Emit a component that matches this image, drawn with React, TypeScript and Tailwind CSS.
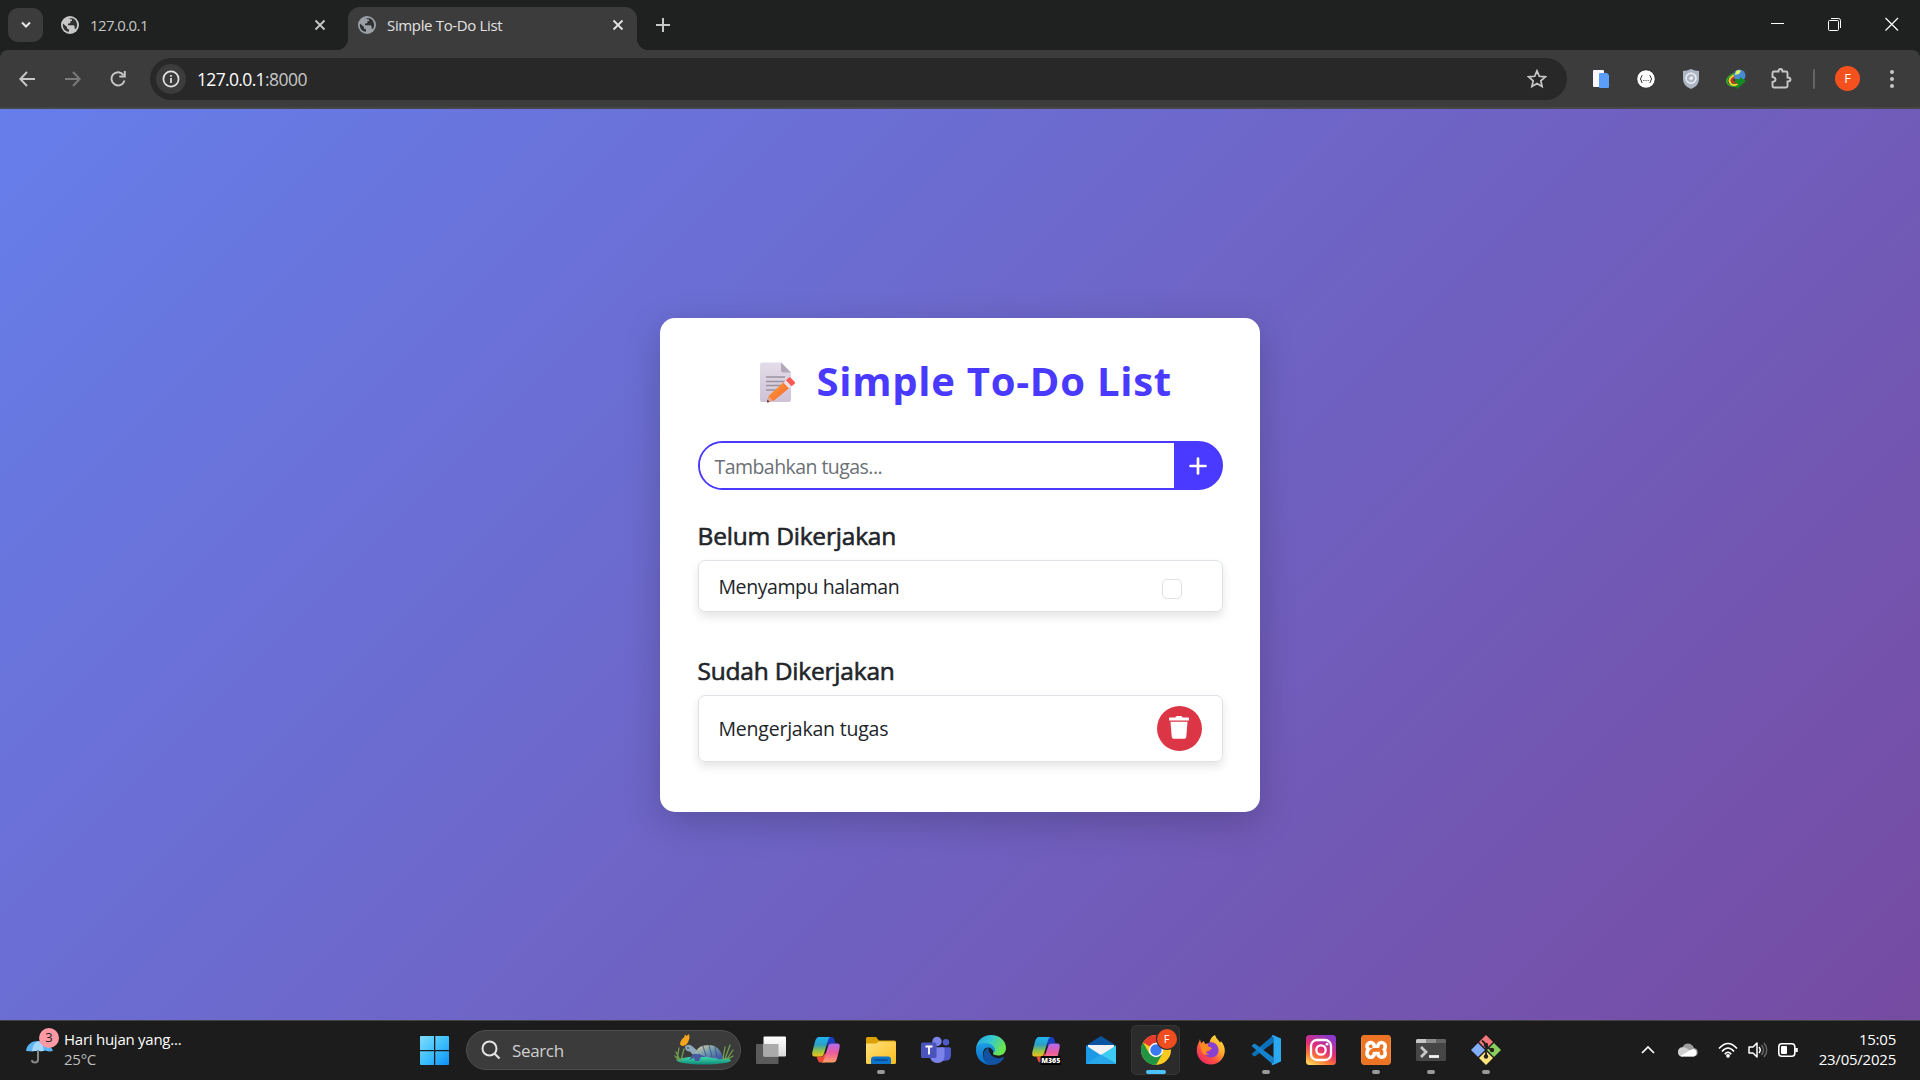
import React from "react";
import { SiXampp } from "react-icons/si";

type P = { children?: React.ReactNode; className?: string; vb?: string };
const Svg = ({ children, className, vb = "0 0 24 24" }: P) => (
  <svg viewBox={vb} className={"shrink-0 " + (className ?? "")} fill="none">{children}</svg>
);

const Globe = ({ color }: { color: string }) => (
  <Svg vb="0 0 18 18" className="size-[18px]">
    <circle cx="9" cy="9" r="9" fill={color} />
    <path d="M2 7.500 6 11v1.600l2 1v2.200C4.300 15.600 1.800 12.600 1.800 9zM8.500 2.200h3.200c2.600 1.100 4.400 3.700 4.400 6.600 0 1.700-.5 3.200-1.500 4.300l-1-.5v-2.300l-1-1H7V7.500h1.500l1-1V5h1.500V3.500L8.500 3z" fill="#303231" />
  </Svg>
);

const Close = ({ className }: P) => (
  <Svg vb="0 0 12 12" className={"size-3 " + (className ?? "")}>
    <path d="M1.500 1.500l9 9M10.500 1.500l-9 9" stroke="currentColor" strokeWidth="1.800" />
  </Svg>
);

const Memo = () => (
  <Svg vb="0 0 36 42" className="mt-[6px] h-[42px] w-9">
    <defs>
      <linearGradient id="paper" x1="0" y1="0" x2="0" y2="1"><stop stopColor="#e3dce8" /><stop offset="1" stopColor="#cfc3d7" /></linearGradient>
      <linearGradient id="pencil" x1="0" y1="0" x2="1" y2="1"><stop stopColor="#ffa336" /><stop offset="1" stopColor="#f4602f" /></linearGradient>
    </defs>
    <path d="M2 .5h19L31 10.500V38a2 2 0 0 1-2 2H2a2 2 0 0 1-2-2V2.500a2 2 0 0 1 2-2z" fill="url(#paper)" />
    <path d="M21 .5 31 10.500H23a2 2 0 0 1-2-2z" fill="#b3a8b8" />
    <path d="M6 15h19M6 19.500h19M6 23.500h17M6 28h10" stroke="#9a929e" strokeWidth="1.300" />
    <path d="M9 33.500 25 19l5.500 6L14 38.500l-7 1.500z" fill="url(#pencil)" />
    <path d="M8.500 34 13 38.800 7 40.500z" fill="#e6a58d" /><path d="m7.500 37.500 2 2.500-2.500.5z" fill="#43303a" />
    <path d="m23.500 20.500 5.500 6 2.500-2.300-5.500-6z" fill="#e9e3f0" />
    <path d="m26 18.200 3-2.600q1-.7 2 .3l3.800 4q.7 1-.3 2L31.500 24.200z" fill="#fb5a53" />
  </Svg>
);

const Windows = () => (
  <Svg vb="0 0 30 30" className="size-[30px]">
    <defs><linearGradient id="win" x1="0" y1="0" x2="1" y2="1"><stop stopColor="#7fdcfb" /><stop offset=".5" stopColor="#3fc0fc" /><stop offset="1" stopColor="#0c91f7" /></linearGradient></defs>
    <path d="M0 1q0-1 1-1h13v14H0zM15.300 0H28q1 0 1 1v13H15.300zM0 15.300h14V29H1q-1 0-1-1zM15.300 15.300H29V28q0 1-1 1H15.300z" fill="url(#win)" />
  </Svg>
);

const Turtle = () => (
  <Svg vb="0 0 60 32" className="h-8 w-[60px]">
    <defs>
      <linearGradient id="pond" x1="0" y1="0" x2="0" y2="1"><stop stopColor="#3de0b0" /><stop offset="1" stopColor="#118a79" /></linearGradient>
      <linearGradient id="shell" x1="0" y1="0" x2="1" y2="1"><stop stopColor="#e5d2a1" /><stop offset=".5" stopColor="#6d98ad" /><stop offset="1" stopColor="#3c4ba2" /></linearGradient>
    </defs>
    <ellipse cx="30" cy="26.500" rx="27" ry="4" fill="url(#pond)" />
    <path d="M3 26 5 14M6 26 2 18M7 26l3-11M4 25l-3-3M49 25l2-12M51 25l5-14M53 25l6-9M50 25l-4-5M54 25l5-3" stroke="#6f9f50" strokeWidth="1.300" strokeLinecap="round" />
    <path d="M11 12.500q3-3 7-.5l8 7-1 4q-6-1-9-5.500-5 0-5-5z" fill="#8fa9b8" />
    <path d="M19 20h27l3 5-5 .5-2-2.500H27l-2 4h-4l-1-3-5 2z" fill="#485a9e" />
    <path d="M22 18q2-7 13-7 10 0 14 12-13 4-27-5z" fill="url(#shell)" />
    <path d="m29 12 3 10M35 11l3 12M41 13l2 10" stroke="#354b84" strokeWidth=".8" />
    <path d="M6 9.500Q7 5 10 3.500L11 .5l1.500 1.500L15 0l.5 4-1 3q-1.500 4.500-5.500 5-3 0-3-3z" fill="#f5a51d" />
    <circle cx="14" cy="14" r=".8" fill="#182036" />
  </Svg>
);

const Copilot = ({ m365 = false, id }: { m365?: boolean; id: string }) => (
  <Svg vb="0 0 30 30" className="size-[30px] overflow-visible">
    <defs>
      <linearGradient id={id + "a"} x1="0" y1="0" x2="0" y2="1"><stop stopColor="#1fb3f5" /><stop offset=".4" stopColor="#2c9fc1" /><stop offset=".7" stopColor="#90c248" /><stop offset="1" stopColor="#f2c21b" /></linearGradient>
      <linearGradient id={id + "b"} x1="0" y1="0" x2="0" y2="1"><stop stopColor="#b16aef" /><stop offset=".5" stopColor="#ed5c9c" /><stop offset="1" stopColor="#fba065" /></linearGradient>
    </defs>
    <path d="M16 2h4.500c2 0 2.500 1.500 3 3l1 3.500h-5l-3 3z" fill="#173fc0" />
    <path d="M14 27.500H9.500c-2 0-2.500-1.500-3-3l-1-3h6l3-4z" fill="#e94b36" />
    <path d="M8 2h12c-2 0-2.500 2-3 3.500l-4 13c-.7 2-1.500 3-3.500 3h-6C.5 21.500 1 18 2 14.500L4 6.500C5 3.500 6 2 8 2z" fill={`url(#${id}a)`} />
    <path d="M22 27.500H10c2 0 2.500-2 3-3.500l4-12.500c.7-2 1.500-3 3.500-3h6c3 0 2.500 3.500 1.500 7l-2 8c-1 3-2 4-4 4z" fill={`url(#${id}b)`} />
    {m365 && <><rect x="9.500" y="21" width="20.500" height="9" rx="1.500" fill="#000" /><text x="19.800" y="28.200" textAnchor="middle" fontSize="7" fontWeight="800" fontFamily="Open Sans, sans-serif" fill="#fff">M365</text></>}
  </Svg>
);

const Folder = () => (
  <Svg vb="0 0 30 30" className="size-[30px]">
    <defs><linearGradient id="fold" x1="0" y1="0" x2="1" y2="1"><stop stopColor="#ffe17e" /><stop offset="1" stopColor="#fcbd1c" /></linearGradient></defs>
    <path d="M0 3.500Q0 2 1.500 2H10l3 3.500h15.500Q30 5.500 30 7v5H0z" fill="#dda007" />
    <path d="M0 8.500h10l3-2h15.500Q30 6.500 30 8v19.500Q30 29 28.500 29h-27Q0 29 0 27.500z" fill="url(#fold)" />
    <path d="M5 29v-4.500q0-3 3-3h14q3 0 3 3V29z" fill="#0d72c9" /><path d="M9 25h12" stroke="#06498d" strokeWidth="1.500" strokeLinecap="round" />
  </Svg>
);

const Teams = () => (
  <Svg vb="0 0 30 30" className="size-[30px]">
    <circle cx="25" cy="7.300" r="3.200" fill="#5059c9" /><circle cx="16" cy="6.500" r="4.700" fill="#7b83eb" />
    <path d="M21 12.300h7.500q1.500 0 1.500 1.500v6.500q0 5-5 5.500h-5z" fill="#5059c9" />
    <path d="M9 12.300h13q1.500 0 1.500 1.500V21q0 7-7 7t-7.500-7z" fill="#7b83eb" />
    <rect y="7.500" width="15.500" height="15.500" rx="1.500" fill="#4b53bc" />
    <path d="M4.500 11.500h7M8 11.500v8" stroke="#fff" strokeWidth="1.800" />
  </Svg>
);

const Edge = () => (
  <Svg vb="0 0 30 30" className="size-[30px]">
    <defs>
      <linearGradient id="eg" x1="0" y1="0" x2="1" y2=".4"><stop stopColor="#249fe4" /><stop offset=".5" stopColor="#34c7d3" /><stop offset="1" stopColor="#6be650" /></linearGradient>
      <linearGradient id="eb" x1="0" y1="0" x2="0" y2="1"><stop stopColor="#1b9ee2" /><stop offset="1" stopColor="#0868c9" /></linearGradient>
    </defs>
    <path d="M0 14C.6 5.500 7 0 15 0c9 0 15 6 15 13 0 5-3.500 7.500-8 7.500-5 0-5.500-2-4.500-3.200C19.500 14 17 11 13 10 7 8.500 2 10 0 14z" fill="url(#eg)" />
    <path d="M0 15C0 9.500 5 8 9 8c6 0 10 3.500 10 7 0 1-.5 1.800-1.200 2.500-.8-3-3-5-5.500-5C8 12.500 7 16 7 19c0 6 4 9.500 9 11h-1C6.500 30 0 23.500 0 15z" fill="url(#eb)" />
    <path d="M12.300 12.500C9 14 7.500 17 7.500 20c0 5.500 4 10 9 10 5 0 9-3 11.500-7 .5-1 0-1.300-1-.8-7 2.800-14-.8-14.700-9.700z" fill="#1152a2" />
  </Svg>
);

const Mail = () => (
  <Svg vb="0 0 30 30" className="size-[30px]">
    <path d="m0 10.500 15-9.500 15 9.500V20H0z" fill="#0a54a0" /><path d="M2 10h26v8L15 24 2 18z" fill="#f2f2f4" />
    <path d="m0 10.500 17 11L30 29H0z" fill="#1d9ae6" /><path d="M30 10.500 15 20l15 9z" fill="#3ccbf4" /><path d="M0 29 15 19.500 30 29z" fill="#28a8ea" />
  </Svg>
);

const Chrome = () => (
  <div className="relative size-[30px]">
    <Svg vb="0 0 30 30" className="size-[30px]">
      <circle cx="15" cy="15" r="15" fill="#ffca20" />
      <path d="M15 15 2 7.500A15 15 0 0 1 28 7.500H15z" fill="#e33b2e" />
      <path d="M2 7.500A15 15 0 0 0 15 30l6.500-11.300L8.500 18.700z" fill="#229544" />
      <circle cx="15" cy="15" r="7.200" fill="#fff" /><circle cx="15" cy="15" r="5.700" fill="#3a7af0" />
    </Svg>
    <span className="absolute left-4 -top-[6px] flex size-5 items-center justify-center rounded-full bg-[#ee4d20] text-[11px] text-white ring-1 ring-[#2b2b2b]">F</span>
  </div>
);

const Firefox = () => (
  <Svg vb="0 0 30 30" className="size-[30px]">
    <defs><linearGradient id="ff" x1="1" y1="0" x2=".2" y2="1"><stop stopColor="#fff04a" /><stop offset=".4" stopColor="#ffae2c" /><stop offset=".7" stopColor="#ff5340" /><stop offset="1" stopColor="#ea2467" /></linearGradient></defs>
    <path d="M4 4q.3 2.500 1.200 4L8 6q0 2 1.500 3l4-1C14 4 16 1.500 19 0q1 3.500 4 6l1 1.500q1-.5.700-1.500 4 4 4.100 9.500A14 14 0 0 1 .8 15.500C.8 11 2 9 3 7z" fill="url(#ff)" />
    <path d="M14 7q7 0 8.500 7c.6 5-3 8.500-7.500 8.500S8 19.500 8 16q2 2 5 0l3-3-4-1.500q-1-3 2-4.500z" fill="#8a3fd4" />
    <path d="M4 10q4-3 7 1l3.500 1.500q-.5 2-4 3-1.500 3 3 4-7 1.500-8-4z" fill="#ff8b24" />
  </Svg>
);

const VSCode = () => (
  <Svg vb="0 0 30 30" className="size-[30px]">
    <path d="m.5 19 2 2q1 .7 2 0L22.500 7.500V0z" fill="#0b70b8" />
    <path d="m.5 11 2-2q1-.7 2 0l18 13.500V30z" fill="#1482cc" />
    <path d="M22 0 30 3.500v23L22 30q-1 0-1.500-1l2-1.500v-25L20.500 1z" fill="#2aa8f0" />
  </Svg>
);

const Instagram = () => (
  <Svg vb="0 0 30 30" className="size-[30px]">
    <defs>
      <linearGradient id="ig" x1=".2" y1="1" x2=".7" y2="0"><stop stopColor="#ffd45c" /><stop offset=".25" stopColor="#fb7a35" /><stop offset=".55" stopColor="#e22d75" /><stop offset="1" stopColor="#8a39cd" /></linearGradient>
    </defs>
    <rect width="30" height="30" rx="3.500" fill="url(#ig)" />
    <rect x="5" y="5" width="20" height="20" rx="6" stroke="#fff" strokeWidth="2.300" /><circle cx="15" cy="15" r="4.700" stroke="#fff" strokeWidth="2.300" /><circle cx="21" cy="9.200" r="1.400" fill="#fff" />
  </Svg>
);

const Xampp = () => (
  <div className="size-[30px] rounded-[5px] bg-white">
    <SiXampp className="size-[30px] text-[#ed7424]" />
  </div>
);

const Terminal = () => (
  <Svg vb="0 0 30 30" className="size-[30px]">
    <rect y="4" width="30" height="22" rx="1.500" fill="#464646" /><path d="M0 8V5.500Q0 4 1.500 4H10v4z" fill="#c6c6c6" /><path d="M10 4h10v4H10z" fill="#8c8c8c" /><path d="M20 4h8.500Q30 4 30 5.500V8H20z" fill="#646464" />
    <path d="m5 12 5 5-5 5" stroke="#c8c8c8" strokeWidth="2.800" /><path d="M13 21.500h10" stroke="#f3f3f3" strokeWidth="2.800" />
  </Svg>
);

const Git = () => (
  <Svg vb="0 0 30 30" className="size-[30px]">
    <path d="m15 0 7 7-7 7-7-7z" fill="#f5777b" /><path d="m7 8 7 7-7 7-7-7z" fill="#83aefa" /><path d="m23 8 7 7-7 7-7-7z" fill="#88cf5d" /><path d="m15 16 7 7-7 7-7-7z" fill="#fde57e" />
    <path d="M11 5.500 15 9.500v13M15 11l6 4.500" stroke="#25201f" strokeWidth="1.800" /><circle cx="15" cy="10" r="2.200" fill="#25201f" /><circle cx="21" cy="15" r="2.200" fill="#25201f" /><circle cx="15" cy="21.500" r="2.200" fill="#25201f" />
  </Svg>
);

const TaskView = () => (
  <Svg vb="0 0 30 30" className="size-[30px]">
    <defs><linearGradient id="tv" x1="0" y1="0" x2="0" y2="1"><stop stopColor="#fff" /><stop offset="1" stopColor="#d9d9d9" /></linearGradient></defs>
    <rect y="9" width="22.500" height="20" rx="1" fill="#5b5b5b" /><rect x="7.500" y="1.500" width="22.500" height="20" rx="1" fill="url(#tv)" /><path d="M7.500 9h15v12.500h-15z" fill="#aaa" />
  </Svg>
);

const Slot = ({ children, dot = false, active = false }: P & { dot?: boolean; active?: boolean }) => (
  <div className={"relative flex h-[50px] w-[55px] items-center justify-center " + (active ? "before:absolute before:inset-x-[3px] before:inset-y-0 before:rounded-[5px] before:border before:border-[#353535] before:bg-[#2b2b2b]" : "")}>
    <div className="relative">{children}</div>
    {dot && <span className="absolute bottom-[1px] h-1 w-2 rounded-full bg-[#999]" />}
    {active && <span className="absolute bottom-[1px] h-1 w-5 rounded-full bg-[#4cc2ff]" />}
  </div>
);

const TabStrip = () => (
  <header className="flex h-[50px] items-start bg-[#1f2120] text-[#c7c7c7]">
    <div className="mt-2 ml-2 flex h-[34px] w-[35px] items-center justify-center rounded-[10px] bg-[#3c3c3c]">
      <Svg vb="0 0 10 8" className="h-2 w-2.5"><path d="m1 1.500 4 4 4-4" stroke="#e6e6e6" strokeWidth="2" /></Svg>
    </div>
    <div className="ml-[18px] flex h-[50px] w-[265px] items-center">
      <Globe color="#c7c7c7" />
      <span className="ml-[11px] text-[15px] tracking-[-0.600px]">127.0.0.1</span>
      <Close className="ml-auto" />
    </div>
    <div className="relative ml-[22px] mt-[7px] flex h-[43px] w-[289px] items-center rounded-t-[12px] bg-[#3c3c3c] pb-[7px] pl-2.5 pr-[13px] text-[#e3e3e3]">
      <span className="absolute -left-3 bottom-0 size-3 bg-[radial-gradient(circle_at_0_0,transparent_12px,#3c3c3c_12.500px)]" />
      <span className="absolute -right-3 bottom-0 size-3 bg-[radial-gradient(circle_at_100%_0,transparent_12px,#3c3c3c_12.500px)]" />
      <Globe color="#9aa0a6" />
      <span className="ml-[11px] text-[15px] tracking-[-0.350px]">Simple To-Do List</span>
      <Close className="ml-auto" />
    </div>
    <Svg vb="0 0 14 14" className="ml-[19px] mt-[18px] size-3.5"><path d="M7 0v14M0 7h14" stroke="#c7c7c7" strokeWidth="2" /></Svg>
    <div className="ml-auto mt-[17px] flex gap-[43px] pr-[21.500px] text-white">
      <Svg vb="0 0 14 14" className="size-3.5"><path d="M0 6.500h13" stroke="#fff" /></Svg>
      <Svg vb="0 0 14 14" className="size-3.5"><path d="M3 1.500h7.500q2 0 2 2V11" stroke="#fff" /><rect x=".5" y="3.500" width="10" height="10" rx="1" stroke="#fff" /></Svg>
      <Svg vb="0 0 14 14" className="size-3.5"><path d="m.5 1 12.500 12.500M13 1 .5 13.500" stroke="#fff" strokeWidth="1.200" /></Svg>
    </div>
  </header>
);

const Toolbar = () => (
  <div className="bg-[#1f2120]">
    <div className="flex h-[59px] items-center rounded-t-[8px] border-b-2 border-[#474747] bg-[#3c3c3c] pl-5">
      <Svg vb="0 0 16 16" className="-ml-px size-4"><path d="M16 8H1.500M8 1 1.300 8 8 15" stroke="#c7c7c7" strokeWidth="1.900" /></Svg>
      <Svg vb="0 0 16 16" className="ml-[30px] size-4"><path d="M0 8h14.500M8 1l6.700 7L8 15" stroke="#7b7b7b" strokeWidth="1.900" /></Svg>
      <Svg vb="0 0 16 16" className="ml-[29px] size-4"><path d="M13.500 4A6.600 6.600 0 1 0 14.500 9.500M14.800 0v5.500H9.300" stroke="#c7c7c7" strokeWidth="1.900" /></Svg>
      <div className="ml-[24px] flex h-[42px] w-[1417px] items-center rounded-full bg-[#282828] pl-1.5 pr-5">
        <div className="flex size-[30px] items-center justify-center rounded-full bg-[#3c3c3c]">
          <Svg vb="0 0 18 18" className="size-[18px]"><circle cx="9" cy="9" r="7.600" stroke="#e3e3e3" strokeWidth="1.700" /><path d="M9 8v5M9 5v1.800" stroke="#e3e3e3" strokeWidth="1.700" /></Svg>
        </div>
        <span className="ml-[11px] mt-px text-[17.500px] tracking-[-0.650px] text-white">127.0.0.1<span className="tracking-[-0.500px] text-[#c7c7c7]">:8000</span></span>
        <Svg vb="0 0 20 20" className="ml-auto size-5"><path d="m10 1.800 2.300 5.500 6 .5-4.500 4 1.300 5.800L10 14.500l-5.100 3.100 1.300-5.800-4.500-4 6-.5z" stroke="#c7c7c7" strokeWidth="1.700" /></Svg>
      </div>
      <Svg vb="0 0 20 20" className="ml-[24px] size-5"><rect x="2" y="1" width="11" height="17" rx="1" fill="#f7f9ff" /><path d="M8 5q0-1 1-1h7l2 2v12q0 1-1 1H9q-1 0-1-1z" fill="#5b9efa" /></Svg>
      <Svg vb="0 0 20 20" className="ml-[25px] size-5"><circle cx="10" cy="10" r="9.300" fill="#fff" stroke="#252525" /><path d="M6.500 6.500Q5.300 6.500 5.300 8T4 10Q5.300 10 5.300 12t1.200 1.500M13.500 6.500Q14.700 6.500 14.700 8T16 10Q14.700 10 14.700 12t-1.200 1.500M7.300 11.500h1M9.500 11.500h1M11.700 11.500h1" stroke="#333" /></Svg>
      <Svg vb="0 0 20 20" className="ml-[25px] size-5"><path d="M10 0q4 2 8 2v8q0 7-8 10-8-3-8-10V2q4 0 8-2z" fill="#aeb6c4" /><circle cx="10" cy="9.300" r="5" stroke="#edf1f5" strokeWidth="1.500" /><path d="M8 9.500 10.500 7l2 2-2.500 2.500z" fill="#edf1f5" /></Svg>
      <Svg vb="0 0 20 20" className="ml-[25px] size-5"><circle cx="13.500" cy="6.500" r="6" fill="#498bd0" /><path d="M10 2q3-2 5 0l-2 3-4 1z" fill="#dcf26c" /><path d="M8 4.500Q0 8 1 13.500 3 18 12 17" stroke="#31a82e" strokeWidth="1.800" /><path d="M8 6.500Q2 9.500 4 13.500T12 15" stroke="#f3d62c" strokeWidth="2" /><path d="M8.500 8Q5 10 6 12t6 1.500" stroke="#d93327" strokeWidth="1.800" /><path d="M9 10h5V8l6 4-9 8-1-3 3-2-4-1z" fill="#168b21" /></Svg>
      <Svg vb="0 0 21 21" className="ml-[25px] size-[21px]"><path d="M1.500 5Q1.500 3.500 3 3.500h4.500q0-2.500 2-2.500t2 2.500H15q1.500 0 1.500 1.500v4.500q3 0 3 2t-3 2V18q0 1.500-1.500 1.500H3q-1.500 0-1.500-1.500v-4q3-.5 3-2.500t-3-2.500z" stroke="#c7c7c7" strokeWidth="1.900" /></Svg>
      <span className="ml-[21px] h-5 w-0.5 rounded bg-[#646464]" />
      <span className="ml-[20px] flex size-[25px] items-center justify-center rounded-full bg-[#f4511e] text-[13px] text-white">F</span>
      <span className="ml-[30px] flex flex-col gap-[3px]">
        <i className="size-1 rounded-full bg-[#c7c7c7]" /><i className="size-1 rounded-full bg-[#c7c7c7]" /><i className="size-1 rounded-full bg-[#c7c7c7]" />
      </span>
    </div>
  </div>
);

const Heading = ({ children }: P) => <h2 className="text-[24.500px] leading-[30px] tracking-[-0.200px] text-[#212529] [-webkit-text-stroke:0.600px_#212529]">{children}</h2>;

const TodoCard = () => (
  <section className="h-[494px] w-[600px] rounded-[15px] bg-white px-[37.500px] pt-[38px] shadow-[0_10px_37px_rgba(0,0,0,0.2)]">
    <h1 className="flex h-12 items-center pl-[62px] text-[40px] font-bold text-[#4a3aff]">
      <Memo />
      <span className="ml-[21px] mt-[3px] whitespace-nowrap tracking-[0.750px]">Simple To-Do List</span>
    </h1>
    <div className="mt-[37px] flex h-[49px] overflow-hidden rounded-full border-2 border-[#4a3aff] bg-[linear-gradient(to_right,#fff_50%,#4a3aff_50%)]">
      <div className="flex flex-1 items-center bg-white pl-[15px] pt-1 text-[19.500px] tracking-[-0.550px] text-[#6b7075]">Tambahkan tugas...</div>
      <button className="flex w-[47px] items-center justify-center bg-[#4a3aff]"><Svg vb="0 0 18 18" className="ml-0.5 mt-0.5 size-[18px]"><path d="M9 1.500v15M1.500 9h15" stroke="#fff" strokeWidth="2.700" strokeLinecap="round" /></Svg></button>
    </div>
    <div className="mt-[31px]"><Heading>Belum Dikerjakan</Heading></div>
    <div className="mt-[9px] flex h-[52px] items-center justify-between rounded-[7px] border border-[#dee2e6] pl-5 pr-10 text-[19.500px] text-[#212529] shadow-[0_5px_10px_rgba(0,0,0,0.1)]">
      <span className="mt-[3px] tracking-[-0.420px]">Menyampu halaman</span>
      <span className="mt-[6px] size-5 rounded-[5px] border border-[#dee2e6]" />
    </div>
    <div className="mt-[44px]"><Heading>Sudah Dikerjakan</Heading></div>
    <div className="mt-[9px] flex h-[67px] items-center justify-between rounded-[7px] border border-[#dee2e6] px-5 text-[19.500px] text-[#212529] shadow-[0_5px_10px_rgba(0,0,0,0.1)]">
      <span className="mt-px tracking-[-0.220px]">Mengerjakan tugas</span>
      <button className="flex size-[45px] items-center justify-center rounded-full bg-[#dc3545]">
        <Svg vb="0 0 20 23" className="-mt-px h-[23px] w-5"><path d="M1 1.500h5.500q0-1.500 1.500-1.500h4q1.500 0 1.500 1.500H19q1 0 1 1v2H0v-2q0-1 1-1zM1.500 5.800h17l-1.200 15q-.1 2-2 2H4.700q-1.900 0-2-2z" fill="#fff" /></Svg>
      </button>
    </div>
  </section>
);

const Taskbar = () => (
  <footer className="flex h-[60px] items-center border-t border-[#434343] bg-[#1c1c1c] text-white">
    <div className="relative -mt-0.5 ml-[25px] size-[30px]">
      <Svg vb="0 0 30 30" className="size-[30px]"><path d="M1 16C2 9 7 6 13 6s13 4 15 10l-4 .5-4-1-4 1-4-1-4 1z" fill="#5bb4f4" /><path d="M7 16q1-8 6-10 5 2 6 10" fill="#a4d9ff" /><path d="M13 15v9.500q0 3-3 3t-3-2.500" stroke="#888" strokeWidth="2" /></Svg>
      <span className="absolute left-[14px] -top-[7px] flex size-5 items-center justify-center rounded-full bg-[#ff99a4] text-[13px] text-[#222]">3</span>
    </div>
    <div className="ml-[9px] -mt-[3px] w-[355px] text-[15px] leading-5 tracking-[-0.250px]">
      <div>Hari hujan yang...</div>
      <div className="text-[#bfbfbf]">25°C</div>
    </div>
    <div className="ml-px"><Windows /></div>
    <div className="-mt-px ml-[16px] flex h-10 w-[275px] items-center rounded-full border border-[#4f4f4f] bg-[#3b3b3b] pl-3.5 pr-1.5">
      <Svg vb="0 0 20 20" className="size-5"><circle cx="8.500" cy="8.500" r="7" stroke="#e3e3e3" strokeWidth="2" /><path d="m13.500 13.500 5 5" stroke="#e3e3e3" strokeWidth="2.200" /></Svg>
      <span className="ml-[11px] mt-0.5 text-[17px] tracking-[-0.350px] text-[#cfcfcf]">Search</span>
      <div className="ml-auto"><Turtle /></div>
    </div>
    <div className="ml-[2px] -mt-px flex">
      <Slot><TaskView /></Slot>
      <Slot><Copilot id="cp" /></Slot>
      <Slot dot><Folder /></Slot>
      <Slot><Teams /></Slot>
      <Slot><Edge /></Slot>
      <Slot><Copilot id="cm" m365 /></Slot>
      <Slot><Mail /></Slot>
      <Slot active><Chrome /></Slot>
      <Slot><Firefox /></Slot>
      <Slot dot><VSCode /></Slot>
      <Slot><Instagram /></Slot>
      <Slot dot><Xampp /></Slot>
      <Slot dot><Terminal /></Slot>
      <Slot dot><Git /></Slot>
    </div>
    <div className="-mt-[2px] ml-auto flex items-center pr-[24px]">
      <Svg vb="0 0 14 8" className="h-2 w-3.5"><path d="m1 7 6-6 6 6" stroke="#fff" strokeWidth="1.700" /></Svg>
      <Svg vb="0 0 20 14" className="ml-[23px] h-3.5 w-5"><path d="M4.500 13.500a4.500 4.500 0 0 1 0-9Q6 .5 10 .5t6 4.500a4.300 4.300 0 0 1 0 8.500z" fill="#9c9c9c" /><path d="M3 4.500q3-1 6 1l7 4-12 4C1 13.500 0 11 0 9q.5-4 3-4.500z" fill="#cfcfcf" /><path d="m2.500 13 10-6q1.500-1 3.500-1a4 4 0 0 1 0 7.500H4z" fill="#fff" /></Svg>
      <Svg vb="0 0 20 16" className="ml-5 h-4 w-5"><path d="M1 6.500q9-10 18 0M4 9.500q6-7 12 0M6.800 12.200q3.200-4 6.400 0" stroke="#fff" strokeWidth="1.600" /><circle cx="10" cy="13.800" r="1.900" fill="#fff" /></Svg>
      <Svg vb="0 0 20 18" className="ml-2.5 h-[18px] w-5"><path d="M1 6h4l4-4v14l-4-4H1z" stroke="#fff" strokeWidth="1.500" strokeLinejoin="round" /><path d="M11 6q2.500 3 0 6" stroke="#fff" strokeWidth="1.500" /><path d="M13.500 4q4 5 0 10M16 2q5.500 7 0 14" stroke="#666" strokeWidth="1.500" /></Svg>
      <Svg vb="0 0 20 14" className="ml-2.5 h-3.5 w-5"><rect x=".8" y=".8" width="16" height="12.400" rx="3" stroke="#fff" strokeWidth="1.600" /><rect x="3" y="3" width="6" height="8" rx="1" fill="#fff" /><path d="M18.500 5v4" stroke="#fff" strokeWidth="2.500" /></Svg>
      <div className="mb-0.5 ml-5 w-[78px] whitespace-nowrap text-right text-[15px] leading-5 tracking-[-0.230px]"><div>15:05</div><div>23/05/2025</div></div>
    </div>
  </footer>
);

export default function App() {
  return (
    <div className="flex h-[1080px] w-[1920px] flex-col overflow-hidden font-['Open_Sans','Noto_Sans',sans-serif]">
      <TabStrip />
      <Toolbar />
      <main className="flex flex-1 items-center justify-center bg-[linear-gradient(135deg,#667eea,#764ba2)]"><TodoCard /></main>
      <Taskbar />
    </div>
  );
}
